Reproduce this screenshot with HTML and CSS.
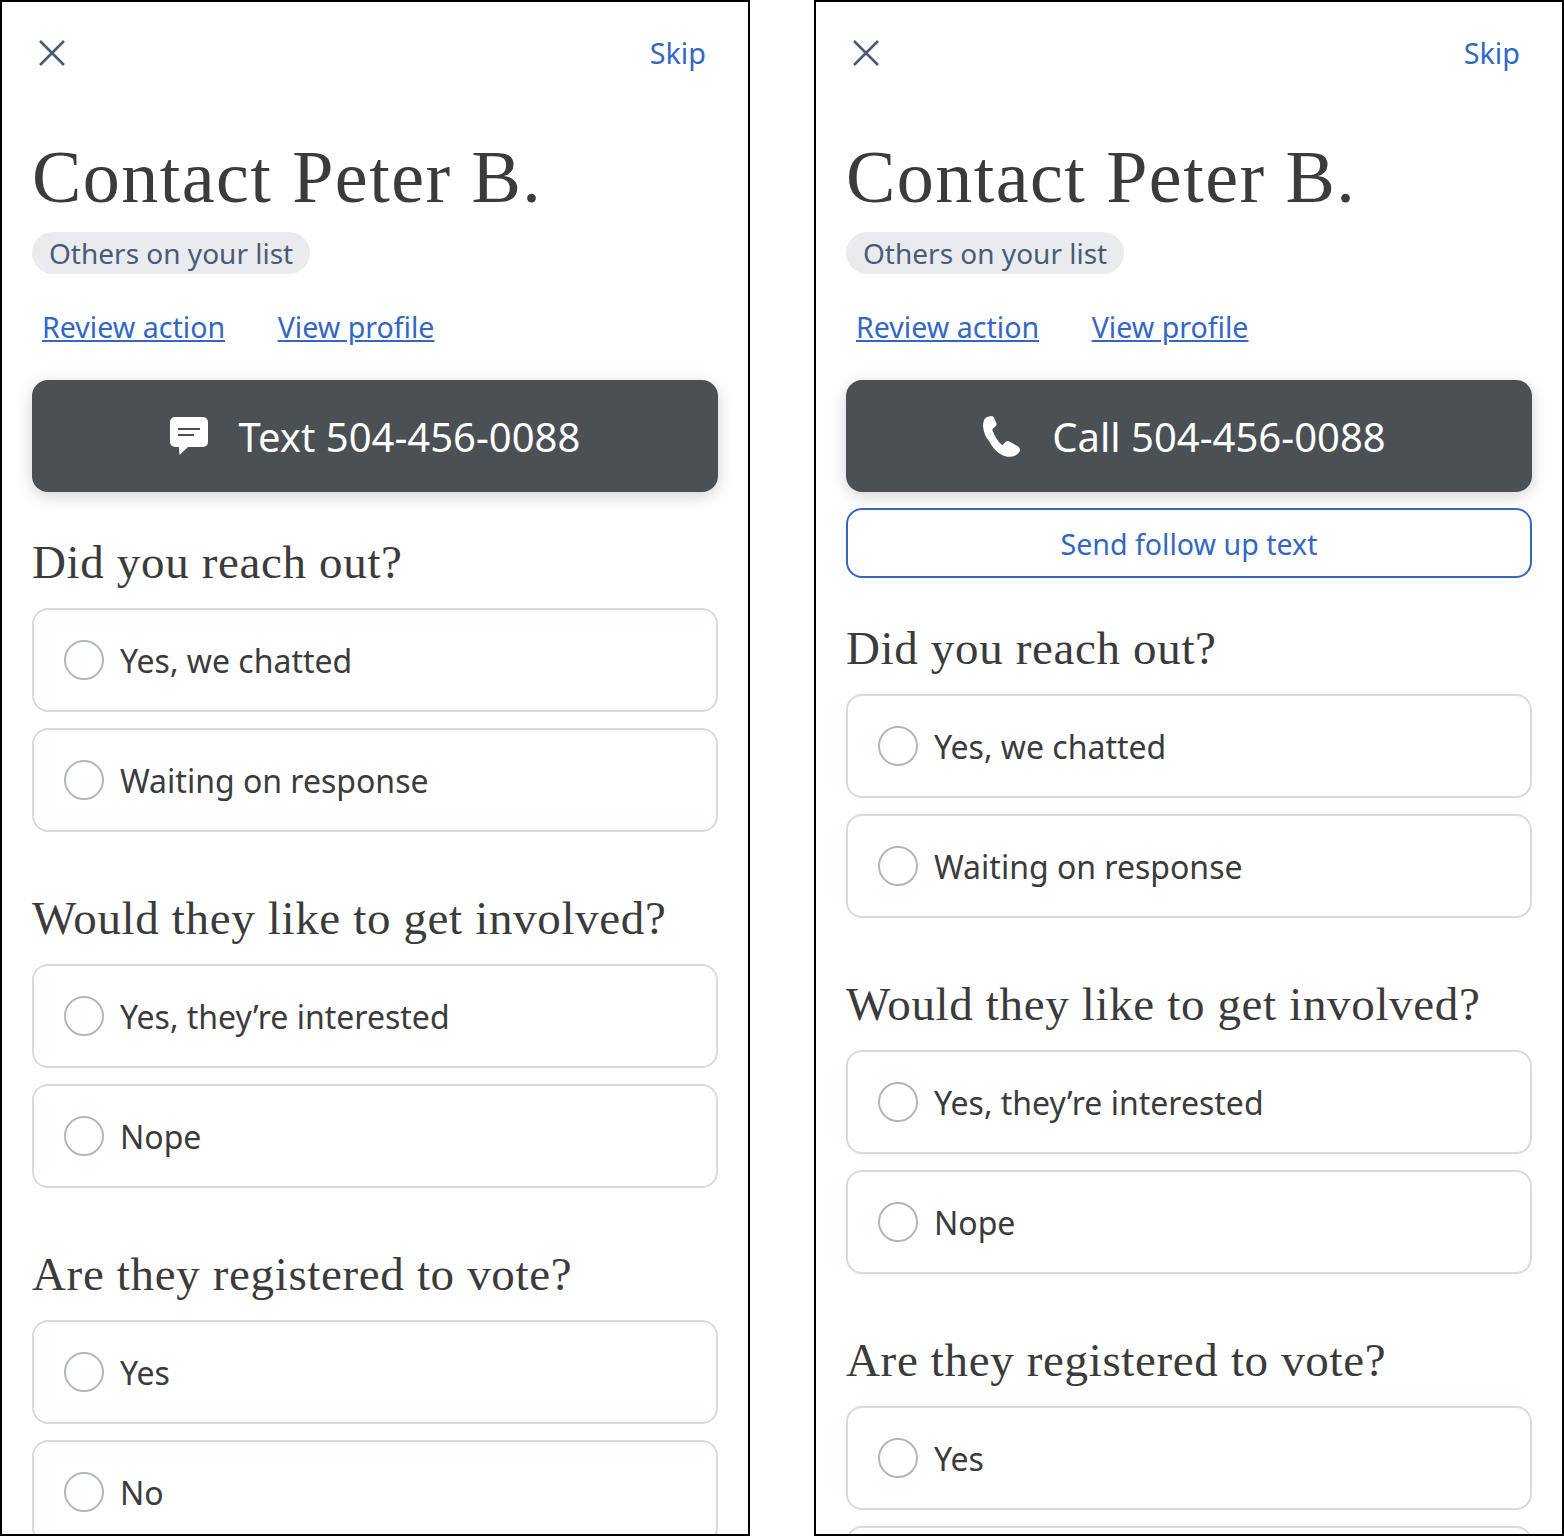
FILE: index.html
```html
<!DOCTYPE html>
<html lang="en">
<head>
  <meta charset="UTF-8" />
  <title>Contact Peter B.</title>
  <link rel="stylesheet" href="styles.css">
</head>
<body>
  <div class="screens">
    <div class="screen">
      <div class="top-bar">
        <svg class="close-icon" viewBox="0 0 28 28"><path d="M2 2l24 24M26 2L2 26"/></svg>
        <a class="skip">Skip</a>
      </div>
      <h1>Contact Peter B.</h1>
      <span class="chip">Others on your list</span>
      <div class="links">
        <a>Review action</a>
        <a>View profile</a>
      </div>
      <button class="main-button">
        <svg class="text-icon" viewBox="0 0 38 38"><path d="M5 0h28a5 5 0 0 1 5 5v20a5 5 0 0 1-5 5H18l-8.500 8L9 30H5a5 5 0 0 1-5-5V5a5 5 0 0 1 5-5z"/><path class="lines" d="M8 12h22M8 18h16"/></svg>
        Text 504-456-0088
      </button>
      <section class="question">
        <h2>Did you reach out?</h2>
        <div class="option"><span class="radio"></span>Yes, we chatted</div>
        <div class="option"><span class="radio"></span>Waiting on response</div>
      </section>
      <section class="question">
        <h2>Would they like to get involved?</h2>
        <div class="option"><span class="radio"></span>Yes, they’re interested</div>
        <div class="option"><span class="radio"></span>Nope</div>
      </section>
      <section class="question">
        <h2>Are they registered to vote?</h2>
        <div class="option"><span class="radio"></span>Yes</div>
        <div class="option"><span class="radio"></span>No</div>
      </section>
    </div>

    <div class="screen">
      <div class="top-bar">
        <svg class="close-icon" viewBox="0 0 28 28"><path d="M2 2l24 24M26 2L2 26"/></svg>
        <a class="skip">Skip</a>
      </div>
      <h1>Contact Peter B.</h1>
      <span class="chip">Others on your list</span>
      <div class="links">
        <a>Review action</a>
        <a>View profile</a>
      </div>
      <button class="main-button call">
        <svg class="phone-icon" viewBox="0 0 37 41"><path d="M2.700 1.700C4.500.5 7.500-.2 9.300.3c1 .3 1.500 1 1.800 1.800l2.300 5.200c.4 1 .2 2-.6 2.800L9.300 13.300c1.600 6 5.200 12 10 16l3.700-3.700c.9-.8 2-.9 3-.4l8.700 5c1.500.9 2.300 2.500 2.300 3.800 0 1-.6 2-1.400 2.800-1.700 1.900-3.900 3.200-6.600 3.700-3.500.6-7 .2-10-1.500-5.500-3-10-8-13-14C2.500 21.500.5 16 .1 10.500-.2 7.500.7 3.500 2.700 1.700z"/></svg>
        Call 504-456-0088
      </button>
      <button class="follow-button">Send follow up text</button>
      <section class="question">
        <h2>Did you reach out?</h2>
        <div class="option"><span class="radio"></span>Yes, we chatted</div>
        <div class="option"><span class="radio"></span>Waiting on response</div>
      </section>
      <section class="question">
        <h2>Would they like to get involved?</h2>
        <div class="option"><span class="radio"></span>Yes, they’re interested</div>
        <div class="option"><span class="radio"></span>Nope</div>
      </section>
      <section class="question">
        <h2>Are they registered to vote?</h2>
        <div class="option"><span class="radio"></span>Yes</div>
        <div class="option"></div>
      </section>
    </div>
  </div>
</body>
</html>
```
FILE: styles.css
```css
:root {
  --blue: #3367c4;
  --slate: #4a5b78;
  --ink: #3b3b3b;
  --line: #d6dae1;
}

body {
  margin: 0;
  font-family: "Noto Sans", sans-serif;
  background-color: #fff;
  color: var(--ink);
}

.screens {
  display: flex;
  justify-content: space-between;
  height: 1536px;
  overflow: hidden;
}

.screen {
  box-sizing: border-box;
  width: 750px;
  height: 1536px;
  padding: 0 30px;
  border: 2px solid #000;
  overflow: hidden;
}

.top-bar {
  display: flex;
  justify-content: space-between;
  align-items: center;
  height: 104px;
  padding: 0 12px 0 6px;
}

.close-icon {
  width: 28px;
  height: 28px;
  margin-bottom: 2px;
  fill: none;
  stroke: var(--slate);
  stroke-width: 2.6;
}

.skip {
  margin-bottom: 4px;
  font-size: 28.8px;
  color: var(--blue);
}

h1 {
  margin: 32px 0 16px;
  font-family: "Liberation Serif", serif;
  font-weight: 400;
  font-size: 74px;
  line-height: 78px;
  letter-spacing: 1.45px;
}

.chip {
  display: inline-block;
  height: 42px;
  padding: 0 17px;
  border-radius: 21px;
  background-color: #e9ebef;
  color: var(--slate);
  font-size: 28px;
  line-height: 42px;
}

.links {
  display: flex;
  gap: 52.500px;
  margin: 32px 0 32px;
  padding-left: 10px;
  font-size: 28.6px;
  line-height: 42px;
}

.links a {
  color: var(--blue);
  text-decoration: underline;
}

.main-button {
  display: flex;
  justify-content: center;
  align-items: center;
  gap: 31px;
  width: 100%;
  height: 112px;
  border: none;
  border-radius: 16px;
  background-color: #4b5054;
  color: #fff;
  font-family: inherit;
  font-size: 40px;
  box-shadow: 0 4px 16px rgba(0, 0, 0, 0.18);
}

.main-button.call {
  gap: 32px;
}

.text-icon {
  width: 38px;
  height: 38px;
  fill: #fff;
}

.text-icon .lines {
  fill: none;
  stroke: #4b5054;
  stroke-width: 2;
}

.phone-icon {
  width: 37px;
  height: 41px;
  margin-left: -9px;
  fill: #fff;
}

.follow-button {
  display: block;
  width: 100%;
  height: 70px;
  margin-top: 16px;
  border: 2px solid var(--blue);
  border-radius: 16px;
  background-color: #fff;
  color: var(--blue);
  font-family: inherit;
  font-size: 28.6px;
}

.question {
  margin-top: 40px;
}

.question + .question {
  margin-top: 56px;
}

h2 {
  margin: 0 0 16px;
  font-family: "Liberation Serif", serif;
  font-weight: 400;
  font-size: 47px;
  line-height: 60px;
  letter-spacing: 0.65px;
}

.option {
  box-sizing: border-box;
  display: flex;
  align-items: center;
  gap: 16px;
  height: 104px;
  margin-bottom: 16px;
  padding: 0 30px;
  border: 2px solid var(--line);
  border-radius: 16px;
  font-size: 32px;
}

.radio {
  box-sizing: border-box;
  flex: none;
  width: 40px;
  height: 40px;
  border: 2px solid #b0b7c4;
  border-radius: 50%;
}
```
